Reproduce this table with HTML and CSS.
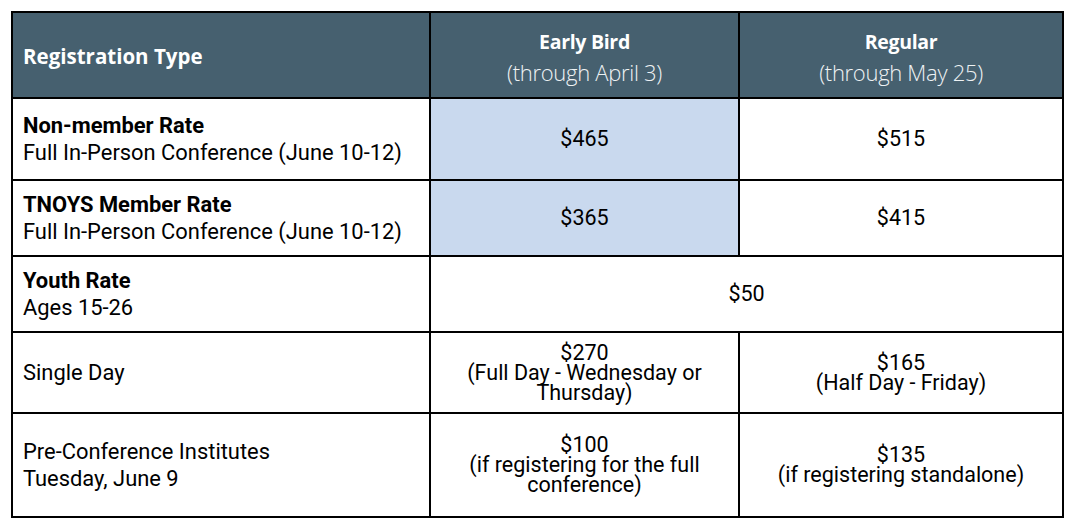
FILE: index.html
```html
<!DOCTYPE html>
<html>
<head>
<meta charset="utf-8">
<link rel="stylesheet" href="styles.css">
</head>
<body>
<table class="rates">
  <colgroup>
    <col class="c1"><col class="c2"><col class="c3">
  </colgroup>
  <thead>
    <tr class="r-head">
      <th class="h-type">Registration Type</th>
      <th class="h-col"><span class="h-title">Early Bird</span><span class="h-sub">(through April 3)</span></th>
      <th class="h-col"><span class="h-title">Regular</span><span class="h-sub">(through May 25)</span></th>
    </tr>
  </thead>
  <tbody>
    <tr class="r1">
      <td class="type"><b>Non-member Rate</b><br>Full In-Person Conference (June 10-12)</td>
      <td class="price early">$465</td>
      <td class="price">$515</td>
    </tr>
    <tr class="r2">
      <td class="type"><b>TNOYS Member Rate</b><br>Full In-Person Conference (June 10-12)</td>
      <td class="price early">$365</td>
      <td class="price">$415</td>
    </tr>
    <tr class="r3">
      <td class="type"><b>Youth Rate</b><br>Ages 15-26</td>
      <td class="price" colspan="2">$50</td>
    </tr>
    <tr class="r4">
      <td class="type">Single Day</td>
      <td class="price tight">$270<br>(Full Day - Wednesday or Thursday)</td>
      <td class="price tight">$165<br>(Half Day - Friday)</td>
    </tr>
    <tr class="r5">
      <td class="type">Pre-Conference Institutes<br>Tuesday, June 9</td>
      <td class="price tight">$100<br>(if registering for the full conference)</td>
      <td class="price tight">$135<br>(if registering standalone)</td>
    </tr>
  </tbody>
</table>
</body>
</html>
```
FILE: styles.css
```css
html, body {
  margin: 0;
  padding: 0;
  background: #ffffff;
}
body {
  padding: 11px 0 0 11px;
  font-family: Roboto, "Liberation Sans", sans-serif;
  color: #000;
}
.rates {
  border-collapse: collapse;
  width: 1051px;
  table-layout: fixed;
}
.c1 { width: 418px; }
.c2 { width: 309px; }
.c3 { width: 324px; }
.rates th, .rates td {
  border: 2px solid #000;
  padding: 0;
}
.r-head { height: 86px; }
.r1 { height: 82px; }
.r2 { height: 76px; }
.r3 { height: 76px; }
.r4 { height: 81px; }
.r5 { height: 104px; }
.rates th {
  background: #46606f;
  color: #fff;
  font-family: "Open Sans", sans-serif;
}
.rates .h-type {
  text-align: left;
  padding: 2px 0 0 10px;
  font-size: 20.5px;
  font-weight: 700;
}
.rates .h-col {
  text-align: center;
  padding-top: 4px;
}
.h-title {
  display: block;
  font-size: 19.5px;
  font-weight: 700;
  line-height: 31px;
  letter-spacing: -0.3px;
}
.h-sub {
  display: block;
  font-size: 22px;
  font-weight: 300;
  line-height: 31px;
  color: #eef2f4;
  letter-spacing: -0.3px;
}
.rates .type {
  padding-left: 10px;
  font-size: 21.9px;
  line-height: 27px;
}
.type b { font-weight: 700; }
.price {
  text-align: center;
  font-size: 21.5px;
  line-height: 26px;
}
.early { background: #c9d9ee; }
.rates .tight {
  line-height: 20px;
  padding: 0 24px;
}
```
